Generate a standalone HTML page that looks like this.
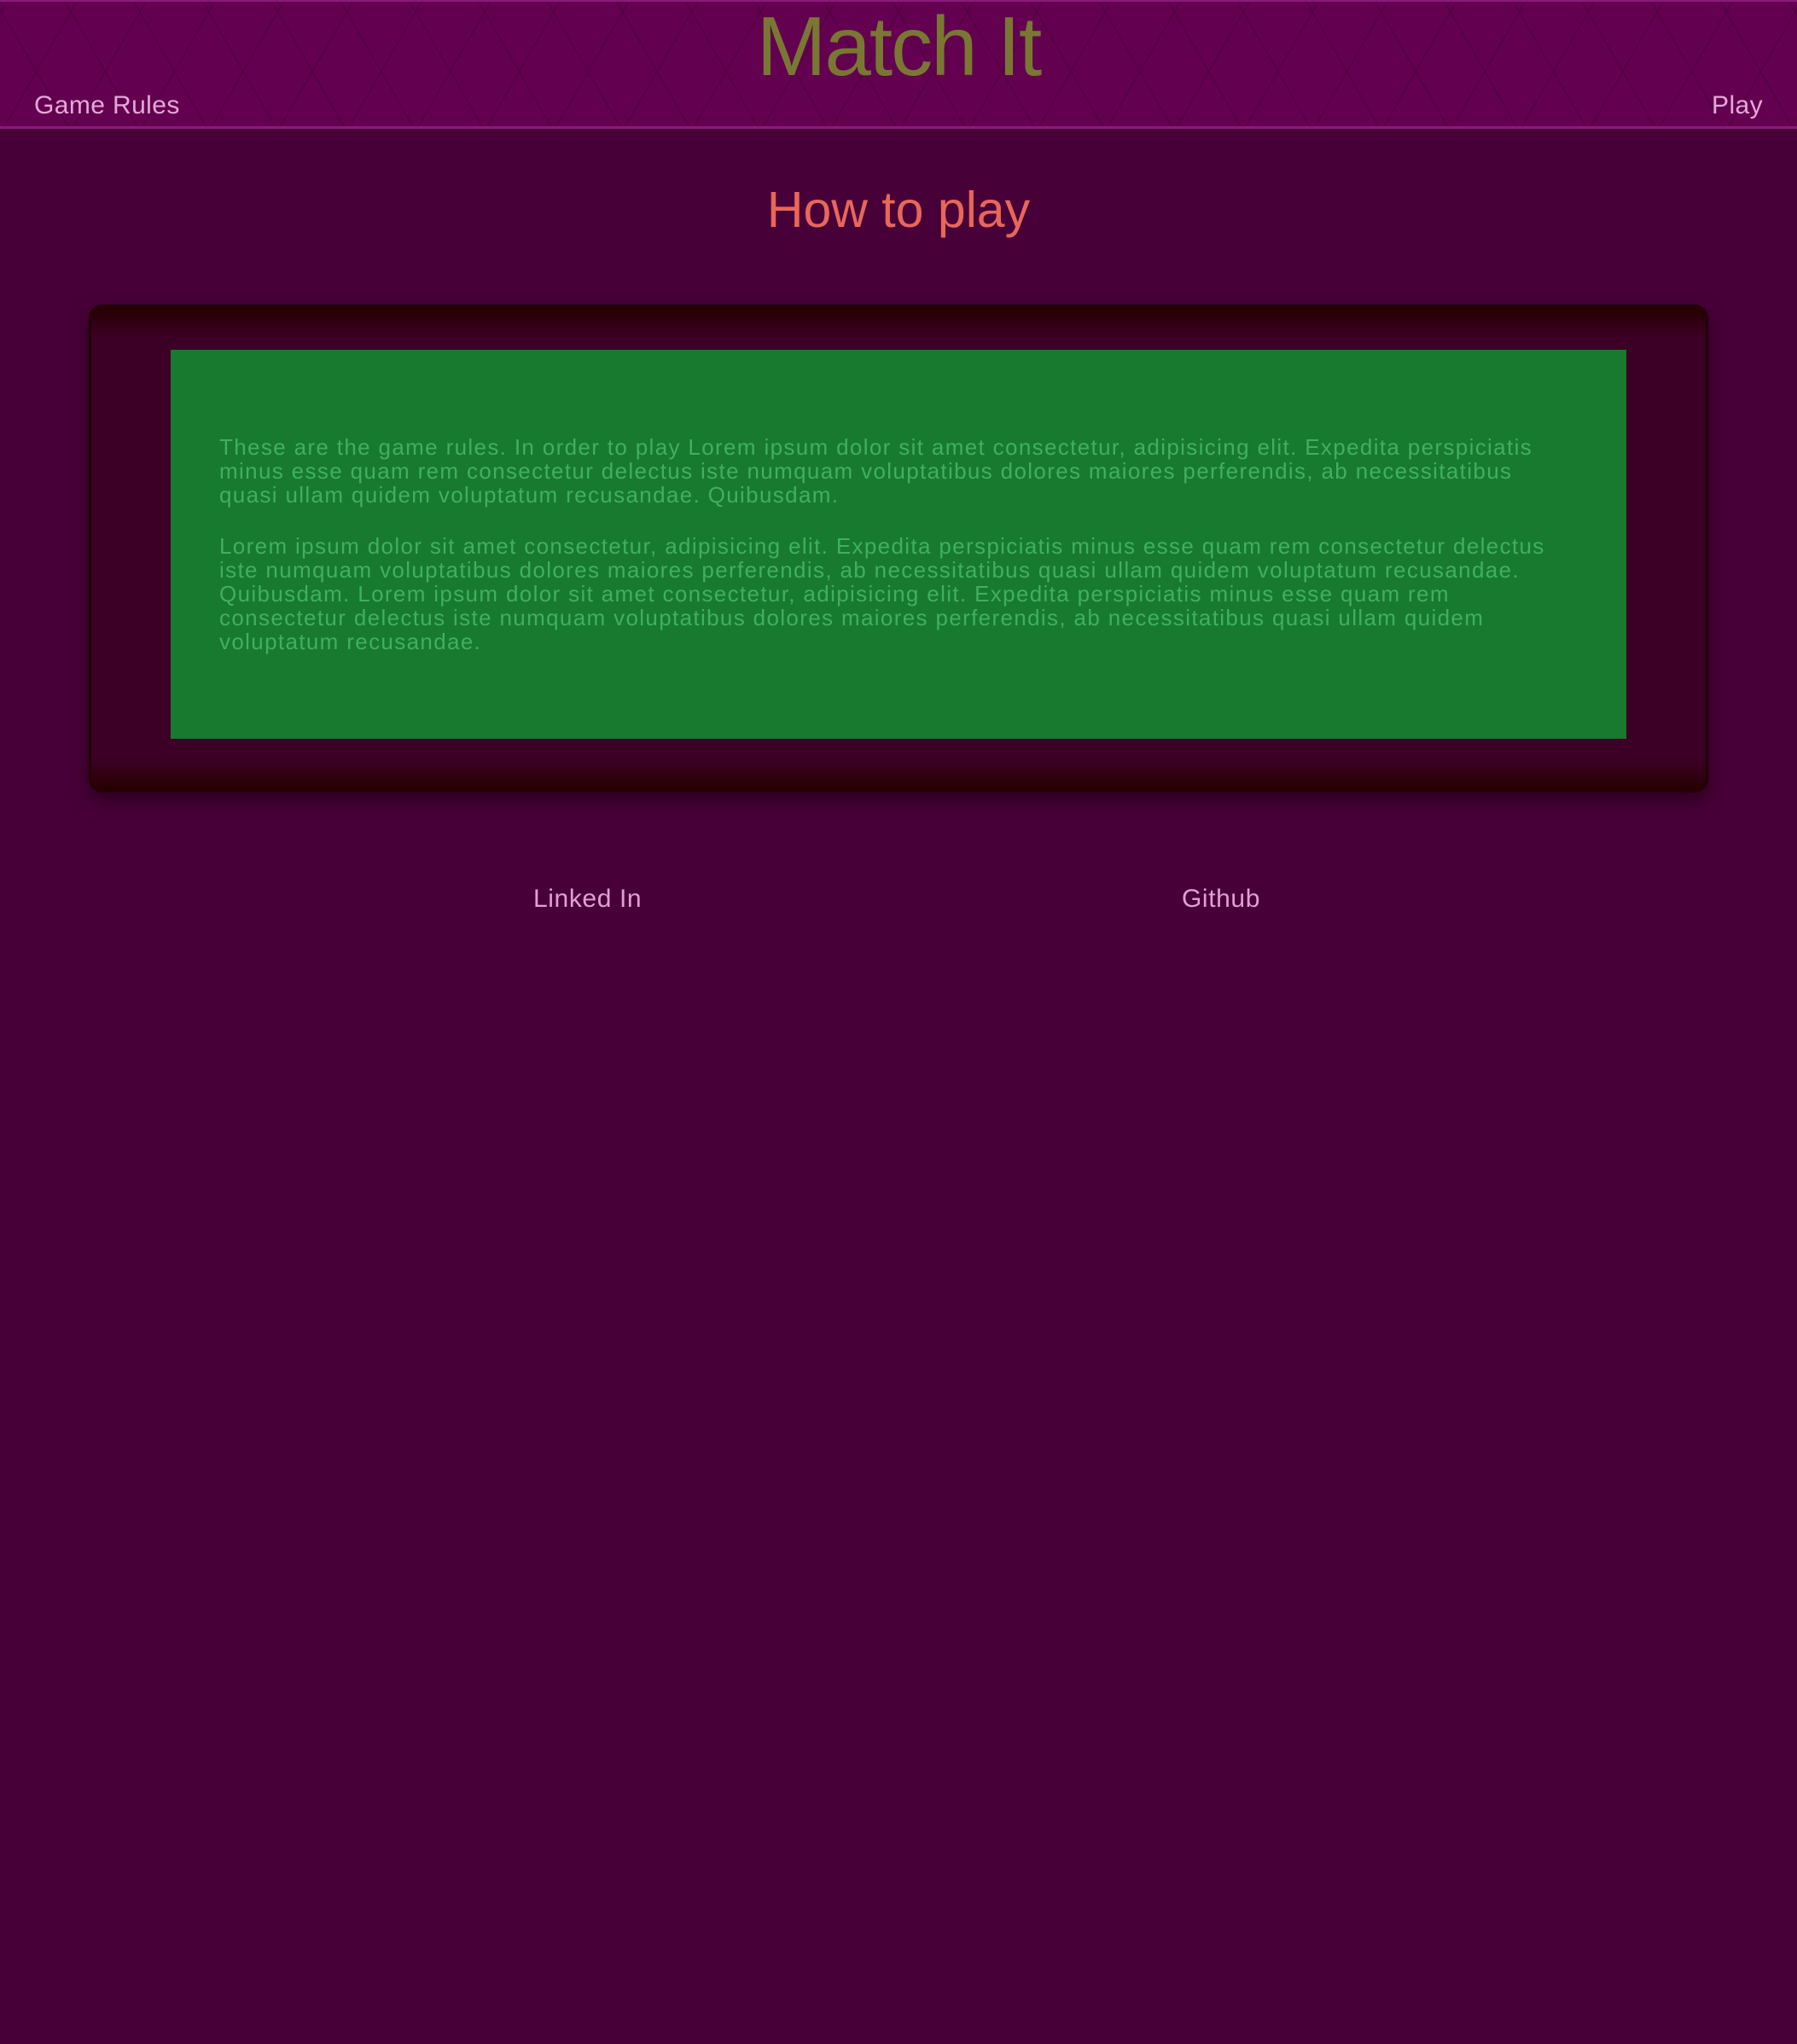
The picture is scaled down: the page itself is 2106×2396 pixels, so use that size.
<!DOCTYPE html>
<html><head><meta charset="utf-8"><style>
html,body{margin:0;padding:0}
body{width:2106px;height:2396px;background:#480038;font-family:"Liberation Sans",sans-serif;position:relative;overflow:hidden}
.hdr{position:absolute;left:0;top:0;width:2106px;height:146px;background:#640050;border-top:2px solid #8a1a78;border-bottom:3px solid #8a1a78;
background-image:repeating-linear-gradient(60deg,transparent 0 68px,rgba(60,0,50,.3) 68px 70px),repeating-linear-gradient(-60deg,transparent 0 68px,rgba(60,0,50,.3) 68px 70px)}
.title{position:absolute;left:0;width:2106px;top:4px;text-align:center;font-size:98px;line-height:100px;color:#797832;letter-spacing:-2px}
.nav{position:absolute;top:107px;font-size:30px;color:#e4a8d8;letter-spacing:0.4px}
h2{position:absolute;margin:0;left:0;width:2106px;top:212px;text-align:center;font-weight:normal;font-size:59px;color:#e8675a}
.box{position:absolute;left:104px;top:357px;width:1892px;height:566px;border:3px solid #220008;border-radius:16px;background:linear-gradient(#260000 0,#3c0026 36px,#3c0026 530px,#260000 566px);box-shadow:0 8px 20px rgba(20,0,10,.6)}
.green{position:absolute;left:200px;top:410px;width:1706px;height:456px;background:#187a2e}
.txt{position:absolute;left:257px;top:510px;font-size:26px;line-height:28px;color:#40b060;white-space:nowrap;letter-spacing:1.35px}
.txt p{margin:0 0 32px}
.foot{position:absolute;top:1037px;font-size:30px;color:#e0a0d4;letter-spacing:0.6px}
</style></head><body>
<div class="hdr"></div>
<div class="title">Match It</div>
<div class="nav" style="left:40px">Game Rules</div>
<div class="nav" style="right:40px">Play</div>
<h2>How to play</h2>
<div class="box"></div>
<div class="green"></div>
<div class="txt"><p>These are the game rules. In order to play Lorem ipsum dolor sit amet consectetur, adipisicing elit. Expedita perspiciatis<br>minus esse quam rem consectetur delectus iste numquam voluptatibus dolores maiores perferendis, ab necessitatibus<br>quasi ullam quidem voluptatum recusandae. Quibusdam.</p><p>Lorem ipsum dolor sit amet consectetur, adipisicing elit. Expedita perspiciatis minus esse quam rem consectetur delectus<br>iste numquam voluptatibus dolores maiores perferendis, ab necessitatibus quasi ullam quidem voluptatum recusandae.<br>Quibusdam. Lorem ipsum dolor sit amet consectetur, adipisicing elit. Expedita perspiciatis minus esse quam rem<br>consectetur delectus iste numquam voluptatibus dolores maiores perferendis, ab necessitatibus quasi ullam quidem<br>voluptatum recusandae.</p></div>
<div class="foot" style="left:625px">Linked In</div>
<div class="foot" style="left:1385px">Github</div>
</body></html>
